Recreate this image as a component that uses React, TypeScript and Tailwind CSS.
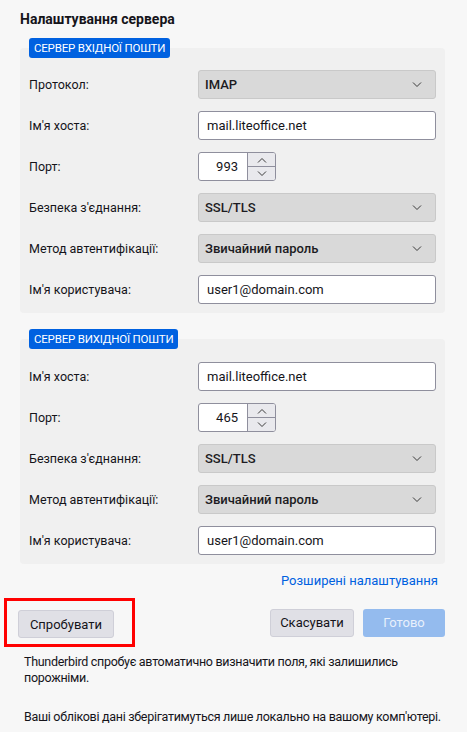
import React from 'react';

// Server settings panel (Thunderbird account setup, manual config)

const Chevron = ({ up = false }: { up?: boolean }) => (
  <svg width="10" height="6" viewBox="0 0 10 6" className="block">
    <path d={up ? 'M1 5.5 L5 1.5 L9 5.5' : 'M1 0.5 L5 4.5 L9 0.5'} fill="none" stroke="#3a3a3a" strokeWidth="1" />
  </svg>
);

const Select = ({ value }: { value: string }) => (
  <div className="flex h-[29px] items-center justify-between rounded-[3px] border border-[#c9c9c9] bg-[#d9d9d9] pl-[6px] pr-[13px] text-[13px] font-medium text-[#1c1b22]">
    <span>{value}</span>
    <Chevron />
  </div>
);

const Input = ({ value }: { value: string }) => (
  <div className="flex h-[29px] items-center rounded-[3px] border border-[#8f8f9d] bg-white pl-[8px] text-[13px] text-[#15141a]">
    {value}
  </div>
);

const Port = ({ value }: { value: string }) => (
  <div className="flex h-[29px] w-[78px] overflow-hidden rounded-[3px] border border-[#8f8f9d] bg-white">
    <div className="flex flex-1 items-center justify-end pr-[9px] text-[13px]">{value}</div>
    <div className="flex w-[28px] flex-col border-l border-[#8f8f9d]">
      <div className="flex flex-1 items-center justify-center border-b border-[#8f8f9d] bg-[#e9e9ed]">
        <Chevron up />
      </div>
      <div className="flex flex-1 items-center justify-center bg-[#e9e9ed]">
        <Chevron />
      </div>
    </div>
  </div>
);

type Row = { label: string; kind: 'select' | 'input' | 'port'; value: string };

const incoming: Row[] = [
  { label: 'Протокол:', kind: 'select', value: 'IMAP' },
  { label: "Ім'я хоста:", kind: 'input', value: 'mail.liteoffice.net' },
  { label: 'Порт:', kind: 'port', value: '993' },
  { label: "Безпека з'єднання:", kind: 'select', value: 'SSL/TLS' },
  { label: 'Метод автентифікації:', kind: 'select', value: 'Звичайний пароль' },
  { label: "Ім'я користувача:", kind: 'input', value: 'user1@domain.com' },
];

const outgoing: Row[] = [
  { label: "Ім'я хоста:", kind: 'input', value: 'mail.liteoffice.net' },
  { label: 'Порт:', kind: 'port', value: '465' },
  { label: "Безпека з'єднання:", kind: 'select', value: 'SSL/TLS' },
  { label: 'Метод автентифікації:', kind: 'select', value: 'Звичайний пароль' },
  { label: "Ім'я користувача:", kind: 'input', value: 'user1@domain.com' },
];

function Section({ title, rows, pt }: { title: string; rows: Row[]; pt: string }) {
  return (
    <div className="flex flex-col">
      <div className="relative z-10 ml-[9px] -mb-[10px] flex h-[20px] items-center self-start rounded-[3px] bg-[#0061e0] px-[5px] text-[11.5px] tracking-[-0.2px] text-white">
        {title}
      </div>
      <div className={`grid grid-cols-[169px_1fr] gap-y-[12px] rounded-[4px] bg-[#f0f0f0] px-[9px] pb-[9px] ${pt}`}>
        {rows.map((r) => (
          <React.Fragment key={r.label}>
            <div className="flex items-center text-[#15141a]">{r.label}</div>
            <div>
              {r.kind === 'select' && <Select value={r.value} />}
              {r.kind === 'input' && <Input value={r.value} />}
              {r.kind === 'port' && <Port value={r.value} />}
            </div>
          </React.Fragment>
        ))}
      </div>
    </div>
  );
}

export default function App() {
  return (
    <div className="min-h-[732px] w-[467px] bg-[#f7f7f7] pl-5 pr-[22px] pt-[10px] font-['Roboto',sans-serif] text-[12.5px] leading-[17px] text-[#15141a]">
      <h2 className="text-[14px] font-bold leading-[18px]">Налаштування сервера</h2>

      <div className="mt-[10px]">
        <Section title="СЕРВЕР ВХІДНОЇ ПОШТИ" rows={incoming} pt="pt-[22px]" />
      </div>
      <div className="mt-[16px]">
        <Section title="СЕРВЕР ВИХІДНОЇ ПОШТИ" rows={outgoing} pt="pt-[23px]" />
      </div>

      <div className="mt-[8px] flex justify-end pr-[7px]">
        <a className="cursor-pointer text-[13px] text-[#0061e0]">Розширені налаштування</a>
      </div>

      <div className="mt-[9px] -ml-4 flex items-center">
        <div className="border-[3px] border-[#ff0000] pb-[6px] pl-[11px] pr-[18px] pt-[9px]">
          <button className="h-[28px] w-[96px] rounded-[3px] border border-[#cfcfd8] bg-[#e0e0e6] text-[13px] text-[#15141a]">
            Спробувати
          </button>
        </div>
        <div className="ml-auto flex gap-[9px]">
          <button className="h-[28px] w-[84px] rounded-[3px] border border-[#cfcfd8] bg-[#e0e0e6] text-[13px] text-[#15141a]">
            Скасувати
          </button>
          <button className="h-[28px] w-[82px] rounded-[3px] bg-[#94bbee] text-[13px] text-[#e8f0fc]">
            Готово
          </button>
        </div>
      </div>

      <div className="mt-[7px] w-[424px] pl-1 leading-[16px] tracking-[-0.3px]">
        <p>Thunderbird спробує автоматично визначити поля, які залишились порожніми.</p>
        <p className="mt-[23px] whitespace-nowrap">Ваші облікові дані зберігатимуться лише локально на вашому комп'ютері.</p>
      </div>
    </div>
  );
}
